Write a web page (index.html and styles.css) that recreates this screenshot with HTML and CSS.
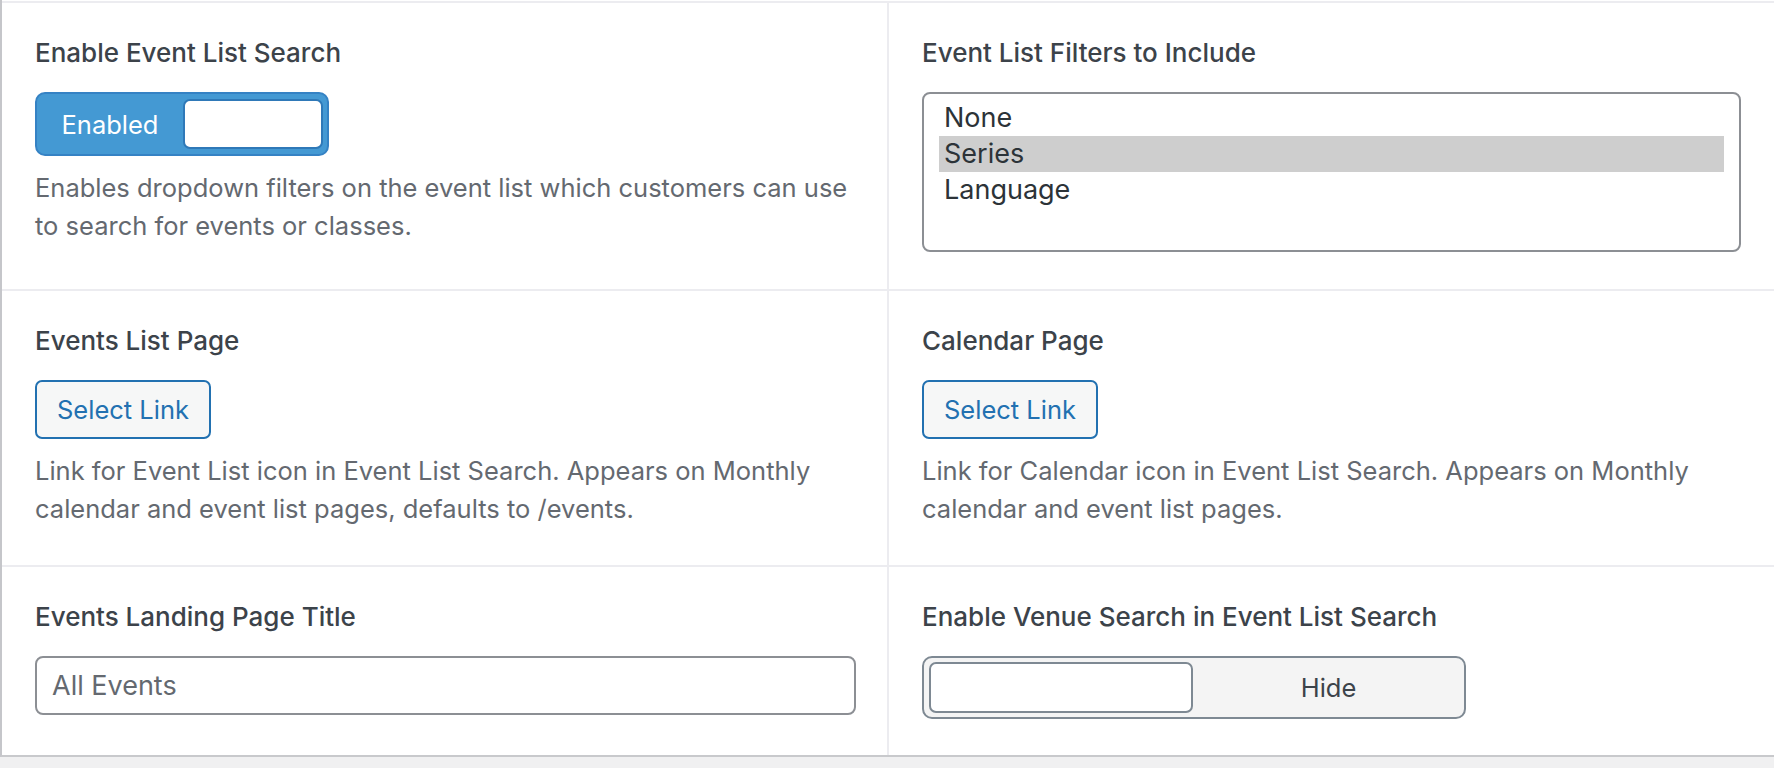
FILE: index.html
```html
<!DOCTYPE html>
<html lang="en">
<head>
<meta charset="utf-8">
<title>Event List Settings</title>
<link rel="stylesheet" href="styles.css">
</head>
<body>
<div class="page">
  <div class="card">
    <div class="row">
      <div class="cell cell-left">
        <div class="label">Enable Event List Search</div>
        <div class="toggle toggle-on">
          <span class="toggle-text">Enabled</span>
          <span class="knob knob-on"></span>
        </div>
        <p class="desc">Enables dropdown filters on the event list which customers can use<br>to search for events or classes.</p>
      </div>
      <div class="cell cell-right">
        <div class="label">Event List Filters to Include</div>
        <div class="listbox">
          <div class="opt">None</div>
          <div class="opt opt-selected">Series</div>
          <div class="opt">Language</div>
        </div>
      </div>
    </div>
    <div class="row">
      <div class="cell cell-left">
        <div class="label">Events List Page</div>
        <button class="btn">Select Link</button>
        <p class="desc">Link for Event List icon in Event List Search. Appears on Monthly<br>calendar and event list pages, defaults to /events.</p>
      </div>
      <div class="cell cell-right">
        <div class="label">Calendar Page</div>
        <button class="btn">Select Link</button>
        <p class="desc">Link for Calendar icon in Event List Search. Appears on Monthly<br>calendar and event list pages.</p>
      </div>
    </div>
    <div class="row row-last">
      <div class="cell cell-left">
        <div class="label">Events Landing Page Title</div>
        <div class="input">All Events</div>
      </div>
      <div class="cell cell-right">
        <div class="label">Enable Venue Search in Event List Search</div>
        <div class="toggle toggle-off">
          <span class="knob knob-off"></span>
          <span class="toggle-text">Hide</span>
        </div>
      </div>
    </div>
  </div>
</div>
</body>
</html>
```

FILE: styles.css
```css
* { box-sizing: border-box; }

html, body {
  margin: 0;
  padding: 0;
  background: #f0f0f1;
  font-family: Inter, "Liberation Sans", Arial, sans-serif;
  overflow: hidden;
}

.page {
  width: 1774px;
  height: 768px;
  background: #f0f0f1;
}

.card {
  background: #ffffff;
  border-left: 2px solid #c5c6ca;
  border-bottom: 2px solid #c8c9cc;
  padding-top: 1px;
}

.row {
  display: grid;
  grid-template-columns: 887px 1fr;
  border-top: 2px solid #ececf0;
}

.cell {
  padding: 32px 33px 37px 33px;
  display: flex;
  flex-direction: column;
  align-items: flex-start;
}

.cell-left {
  border-right: 2px solid #ececf0;
  padding-right: 31px;
}

.row-last .cell {
  padding-bottom: 36px;
}

.label {
  font-size: 26px;
  line-height: 36px;
  font-weight: 500;
  color: #3c434a;
  margin-bottom: 21px;
  white-space: nowrap;
}

.desc {
  margin: 13px 0 0 0;
  font-size: 25.5px;
  line-height: 38px;
  color: #646970;
  white-space: nowrap;
}

/* toggle switch */
.toggle {
  display: flex;
  align-items: center;
  border-radius: 10px;
  border: 2px solid;
}

.toggle-on {
  width: 294px;
  height: 64px;
  background: #4499d3;
  border-color: #3582c4;
}

.toggle-off {
  width: 544px;
  height: 63px;
  background: #f4f4f4;
  border-color: #7e8993;
}

.toggle-text {
  flex: 1;
  text-align: center;
  font-size: 25.5px;
}

.toggle-on .toggle-text {
  color: #ffffff;
}

.toggle-off .toggle-text {
  color: #3c434a;
}

.knob {
  display: block;
  background: #ffffff;
  border: 2px solid;
  border-radius: 7px;
}

.knob-on {
  width: 140px;
  height: 50px;
  margin-right: 4px;
  border-color: #2f79b8;
}

.knob-off {
  width: 264px;
  height: 51px;
  margin-left: 5px;
  border-color: #7e8993;
}

/* multi select list */
.listbox {
  width: 100%;
  height: 160px;
  border: 2px solid #8c8f94;
  border-radius: 8px;
  padding: 6px 15px;
  background: #ffffff;
}

.opt {
  height: 36px;
  line-height: 36px;
  padding-left: 5px;
  font-size: 27px;
  color: #2c3338;
}

.opt-selected {
  background: #cecece;
}

/* button */
.btn {
  height: 59px;
  padding: 0 20px;
  border: 2px solid #2271b1;
  border-radius: 7px;
  background: #f6f7f7;
  color: #2271b1;
  font-family: inherit;
  font-size: 25.5px;
  line-height: 55px;
  cursor: pointer;
}

/* text input */
.input {
  width: 100%;
  height: 59px;
  border: 2px solid #8c8f94;
  border-radius: 8px;
  padding: 0 15px;
  font-size: 27px;
  line-height: 55px;
  color: #646970;
}
```
